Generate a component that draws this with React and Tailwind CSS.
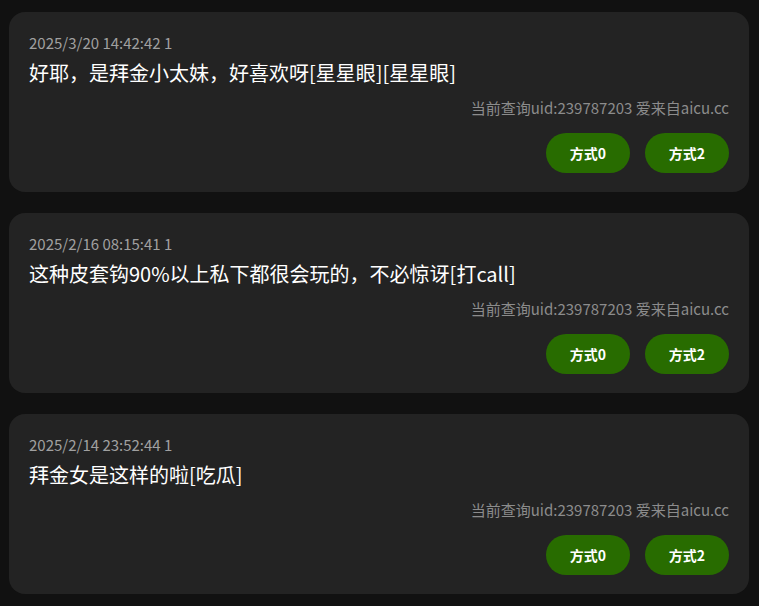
import React from 'react';

const comments = [
  { time: '2025/3/20 14:42:42 1', text: '好耶，是拜金小太妹，好喜欢呀[星星眼][星星眼]' },
  { time: '2025/2/16 08:15:41 1', text: '这种皮套钩90%以上私下都很会玩的，不必惊讶[打call]' },
  { time: '2025/2/14 23:52:44 1', text: '拜金女是这样的啦[吃瓜]' },
];

function CommentCard({ time, text }) {
  return (
    <div className="rounded-2xl bg-[#232323] px-5 pt-5 pb-[19px]">
      <div className="text-[15px] leading-[22px] text-[#a0a0a0]">{time}</div>
      <div className="mt-1 text-[20px] leading-[30px] text-white">{text}</div>
      <div className="mt-[9px] text-right text-[15px] leading-[22px] text-[#8c8c8c]">
        当前查询uid:239787203 爱来自aicu.cc
      </div>
      <div className="mt-[14px] flex justify-end gap-[15px]">
        <button className="h-10 w-[84px] rounded-full bg-[#286c00] text-[14px] font-bold text-white">方式0</button>
        <button className="h-10 w-[84px] rounded-full bg-[#286c00] text-[14px] font-bold text-white">方式2</button>
      </div>
    </div>
  );
}

export default function App() {
  return (
    <div
      className="min-h-[606px] bg-[#111111] pl-[9px] pr-[10px] pt-3 pb-3"
      style={{ fontFamily: '"Noto Sans CJK SC", "Noto Sans", sans-serif' }}
    >
      <div className="flex flex-col gap-[21px]">
        {comments.map((c) => (
          <CommentCard key={c.time} {...c} />
        ))}
      </div>
    </div>
  );
}
